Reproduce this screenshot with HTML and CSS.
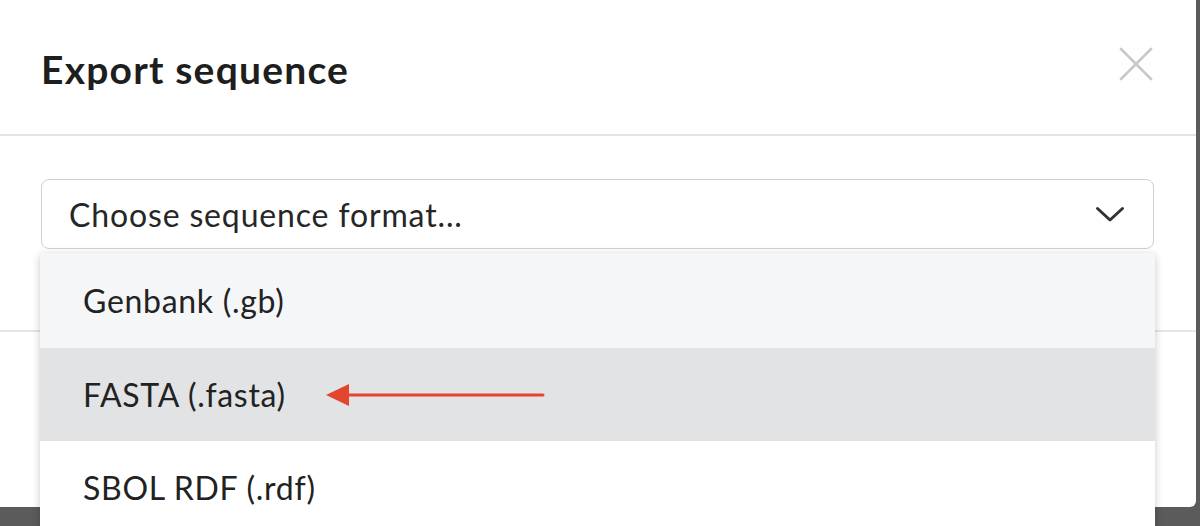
FILE: index.html
```html
<!DOCTYPE html>
<html>
<head>
<meta charset="utf-8">
<link rel="stylesheet" href="styles.css">
</head>
<body>
<div class="modal">
  <div class="modal-header">
    <h1 class="title">Export sequence</h1>
    <svg class="close" width="36" height="36" viewBox="0 0 36 36"><path d="M3 3 L33 33 M33 3 L3 33" stroke="#cacaca" stroke-width="2.8" stroke-linecap="round" fill="none"/></svg>
  </div>
  <div class="modal-body">
    <div class="select-wrap">
      <div class="select">
        <span class="placeholder">Choose sequence format...</span>
        <svg class="chevron" width="30" height="18" viewBox="0 0 30 18"><path d="M2.5 3.5 L15 15 L27.5 3.5" stroke="#333" stroke-width="3" fill="none" stroke-linecap="round" stroke-linejoin="round"/></svg>
      </div>
      <ul class="menu">
        <li class="item hover first">Genbank (.gb)</li>
        <li class="item active">FASTA (.fasta)
          <svg class="arrow" width="222" height="26" viewBox="0 0 222 26"><path d="M22 13 L218 13" stroke="#e3452f" stroke-width="3" stroke-linecap="round"/><path d="M1 13 L24 2 L24 24 Z" fill="#e3452f"/></svg>
        </li>
        <li class="item">SBOL RDF (.rdf)</li>
      </ul>
    </div>
  </div>
  <div class="modal-footer"></div>
</div>
</body>
</html>
```
FILE: styles.css
```css
html, body {
  margin: 0;
  padding: 0;
}
body {
  width: 1200px;
  height: 526px;
  overflow: hidden;
  background: #5b5b5b;
  font-family: Lato, "Liberation Sans", sans-serif;
  color: #222;
}
.modal {
  width: 1196px;
  height: 507px;
  background: #fff;
  border-radius: 0 0 6px 0;
  display: flex;
  flex-direction: column;
}
.modal-header {
  height: 136px;
  border-bottom: 2px solid #e3e3e3;
  display: flex;
  align-items: center;
  justify-content: space-between;
  padding: 0 42px 0 41px;
  box-sizing: border-box;
  flex: none;
}
.title {
  margin: 0;
  font-size: 39px;
  font-weight: 700;
  color: #1e1e1e;
  letter-spacing: 1.2px;
  margin-top: 4px;
}
.close {
  margin-top: -6px;
}
.modal-body {
  padding: 43px 42px 0 41px;
  height: 196px;
  box-sizing: border-box;
  border-bottom: 2px solid #e6e6e6;
  flex: none;
}
.select-wrap {
  position: relative;
}
.select {
  height: 70px;
  box-sizing: border-box;
  border: 1.5px solid #cfcfcf;
  border-radius: 8px;
  display: flex;
  align-items: center;
  justify-content: space-between;
  padding: 0 28px 0 27px;
}
.placeholder {
  font-size: 32px;
  color: #262626;
  letter-spacing: 0.85px;
}
.menu {
  position: absolute;
  left: -1px;
  top: 74px;
  width: 1115px;
  margin: 0;
  padding: 0;
  list-style: none;
  background: #fff;
  box-shadow: 0 2px 8px rgba(0,0,0,0.22);
  border-radius: 4px 4px 0 0;
  z-index: 5;
}
.item {
  height: 93px;
  display: flex;
  align-items: center;
  padding-left: 43px;
  font-size: 32px;
  color: #222;
  letter-spacing: 0.7px;
}
.item.first {
  height: 95px;
}
.item.hover {
  background: #f5f6f7;
  border-radius: 4px 4px 0 0;
}
.item.active {
  background: #e2e3e5;
}
.arrow {
  margin-left: 39px;
}
```
